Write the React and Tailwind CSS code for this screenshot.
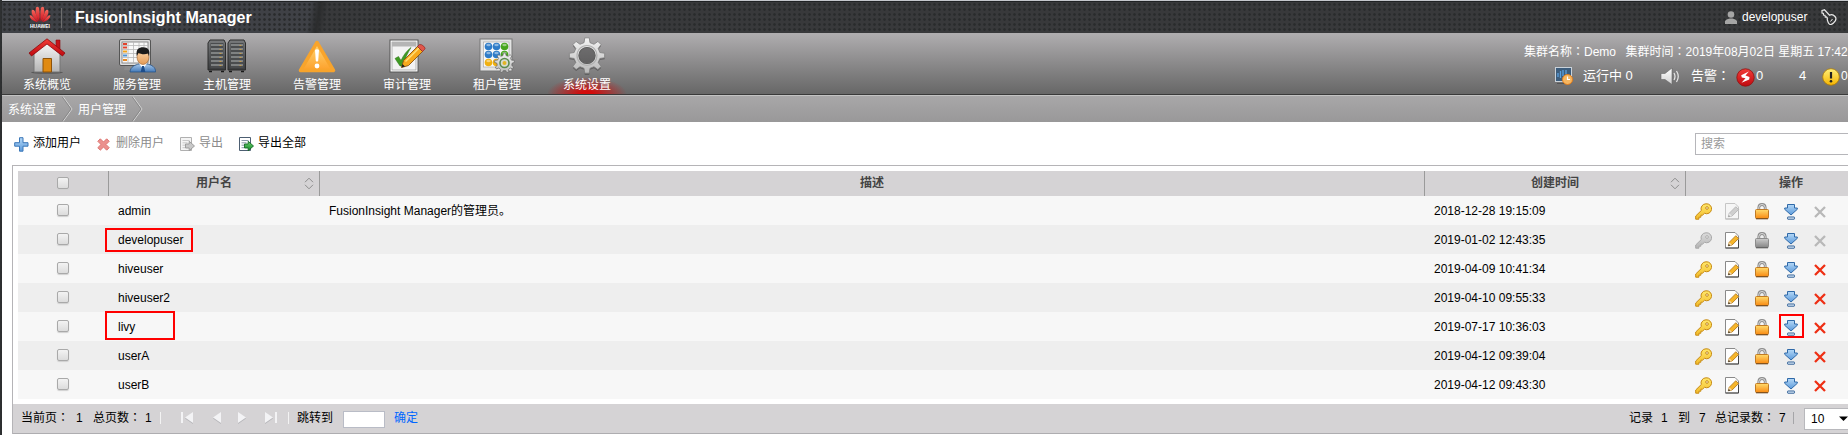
import React from "react";

const FONT = "font-['Liberation_Sans','Noto_Sans_CJK_SC',sans-serif]";
const DOTS = "bg-[radial-gradient(circle,#292b2c_0.9px,transparent_1.7px)] bg-[size:5px_5px]";

const Svg = ({ w, h, children, className = "" }) => (
  <svg width={w} height={h} viewBox={`0 0 ${w} ${h}`} className={`block shrink-0 ${className}`}>{children}</svg>
);

/* Full-width colon, centred in its em box */
const Colon = () => <span className="font-['Noto_Sans_CJK_TC',sans-serif] leading-none">：</span>;

/* ---------- shared gradients ---------- */
const Defs = () => (
  <svg width="0" height="0" className="absolute">
    <defs>
      {[
        ["gWall", "#fafafa", "#b4b4b4"], ["gRed", "#f23c38", "#c00a10"], ["gWarn", "#ffd97a", "#fda02a"],
        ["gGold", "#ffe76a", "#f3bc2a"], ["gGrayKey", "#dcdcdc", "#b4b4b4"], ["gLock", "#ffdb6c", "#f98a12"],
        ["gLockG", "#cccccc", "#858585"], ["gBlue", "#b4d8f7", "#5c9adb"], ["gGear", "#f4f4f4", "#b8b8b8"],
        ["gRack", "#77797b", "#3a3c3e"], ["gGreen", "#6fd06f", "#128a28"], ["gShirt", "#a9c9ec", "#4379b8"],
        ["gFace", "#ffd9ae", "#e39a55"], ["gSpk", "#ffffff", "#d0d0d0"], ["gMinor", "#fff07a", "#f5b400"],
        ["gLogo", "#f4685c", "#d0101e"],
      ].map(([id, a, b]) => (
        <linearGradient key={id} id={id} x1="0" y1="0" x2="0" y2="1">
          <stop offset="0" stopColor={a} /><stop offset="1" stopColor={b} />
        </linearGradient>
      ))}
    </defs>
  </svg>
);

/* ---------- header ---------- */
const Petals = () => (
  <Svg w={24} h={17}>
    <g fill="url(#gLogo)">
      <path d="M11.500 15.500C8 11 6.800 5 8.200 1.200Q10.500 0 11.300 2.500Q12 8 11.500 15.500Z" />
      <path d="M12.500 15.500C16 11 17.200 5 15.800 1.200Q13.500 0 12.700 2.500Q12 8 12.500 15.500Z" />
      <path d="M10.700 15.700C6 13 3 8.500 3.700 4.500Q5 3 6.700 5Q8.700 9.500 10.700 15.700Z" />
      <path d="M13.300 15.700C18 13 21 8.500 20.300 4.500Q19 3 17.300 5Q15.300 9.500 13.300 15.700Z" />
      <path d="M10 16.200C5 15.500 1.800 12.800 1.600 9.300Q3 9 4.500 10.500Q7.500 13 10 16.200Z" />
      <path d="M14 16.200C19 15.500 22.200 12.800 22.400 9.300Q21 9 19.500 10.500Q16.500 13 14 16.200Z" />
    </g>
  </Svg>
);

const House = () => (
  <Svg w={38} h={36}>
    <ellipse cx="19" cy="34.500" rx="16" ry="1.300" fill="#000" opacity=".3" />
    <path d="M28 2h4v12l-4-4z" fill="#c3161a" stroke="#8c0c0e" strokeWidth=".6" />
    <path d="M6 16L19 4L32 16V34H6Z" fill="url(#gWall)" stroke="#777" />
    <path d="M19 .8L37 15L34.500 18L19 6L3.500 18L1 15Z" fill="url(#gRed)" stroke="#8d0a0c" strokeWidth=".8" />
    <path d="M15 20.500H23.500V34H15Z" fill="#e08a12" stroke="#8e5208" />
  </Svg>
);

const Service = () => (
  <Svg w={38} h={36}>
    <rect x="1.500" y="1.500" width="31" height="26" rx="1.500" fill="#dedede" stroke="#555" />
    <rect x="4" y="4" width="26" height="21" fill="#f8f8f8" stroke="#777" strokeWidth=".8" />
    <path d="M4 7.500h26M4 11.500h26M4 15.500h26M4 19.500h26M10 4v21M15.500 4v21M21 4v21M26 4v21" stroke="#b8b8b8" strokeWidth=".8" />
    <path d="M5 6h4M5 9.500h4" stroke="#e2432c" strokeWidth="2" /><path d="M5 13.500h4" stroke="#f2a41c" strokeWidth="2" />
    <path d="M5 17.500h4" stroke="#4b94d8" strokeWidth="2" /><path d="M5 22h4" stroke="#e98a24" strokeWidth="2" />
    <path d="M7 28H20V32H6Z" fill="#8c8c8c" />
    <path d="M12 34C12.500 28.500 17 27 21 26H29C34 27 37.500 29 37.700 34Z" fill="url(#gShirt)" stroke="#285487" strokeWidth=".8" />
    <path d="M21 25.500L25 31L29 25.500L27 24H23Z" fill="#fff" /><path d="M24 28h2l1.300 6h-4.600Z" fill="#1c4d8c" />
    <ellipse cx="25" cy="19" rx="6" ry="7.500" fill="url(#gFace)" stroke="#9b5f2c" strokeWidth=".6" />
    <path d="M18.800 18C17.500 11 21 9.200 25 9.200C30 9.200 32.500 12 31 18.200L30 15.500C26.500 17 22.500 16 20.500 15Z" fill="#1b1b1b" />
  </Svg>
);

const Rack = () => (
  <Svg w={40} h={34}>
    {[1, 21].map((x) => (
      <g key={x}>
        <path d={`M${x + 2} 1H${x + 16}L${x + 17.5} 4V31H${x}V4Z`} fill="url(#gRack)" stroke="#2c2c2c" />
        <rect x={x + 2.5} y="4" width="13" height="25" fill="#4a4c4e" />
        {[6, 10, 14, 18, 22, 26].map((y) => (
          <g key={y}>
            <path d={`M${x + 3} ${y}H${x + 15}`} stroke="#929496" strokeWidth="1.500" />
            <path d={`M${x + 11.5} ${y + 0.5}h2`} stroke="#c49a48" strokeWidth="1" />
          </g>
        ))}
        <path d={`M${x + 1} 32.500h3M${x + 13} 32.500h3`} stroke="#1a1a1a" strokeWidth="1.500" />
      </g>
    ))}
  </Svg>
);

const Warn = () => (
  <Svg w={38} h={34}>
    <path d="M19 3.500L35.500 31.500H2.500Z" fill="url(#gWarn)" stroke="#f8a42c" strokeWidth="3.500" strokeLinejoin="round" />
    <path d="M17 11Q19 9.500 21 11L20.200 22Q19 23 17.800 22Z" fill="#fff" /><circle cx="19" cy="27" r="2.400" fill="#fff" />
  </Svg>
);

const Audit = () => (
  <Svg w={38} h={34}>
    <rect x="2" y="1" width="28" height="32" fill="#fff" stroke="#555" />
    <rect x="4" y="3" width="24" height="28" fill="#f3f3f3" stroke="#999" strokeWidth=".7" />
    <rect x="4" y="3" width="24" height="4.500" fill="#b5b5b5" />
    <path d="M7 19.500L10.500 17.500L13 21.500C15.500 16 18.500 12 23 8.500C19.500 14 17 20 14.500 27H12Z" fill="#3f9b22" stroke="#276d12" strokeWidth=".5" />
    <path d="M13.500 28.500L15.500 21.500L29.500 7.500L34.500 12.500L20.500 26.500Z" fill="#f8a91d" stroke="#8a5410" strokeWidth=".9" />
    <path d="M17.500 22.500L31 9" stroke="#ffe07a" strokeWidth="1.500" />
    <path d="M29.500 7.500L31.500 5.500Q33.500 5 35.800 7.300T36.500 10.500L34.500 12.500Z" fill="#e0564a" stroke="#8f1d18" strokeWidth=".6" />
    <path d="M13.500 28.500L14.500 25L17 27.500Z" fill="#222" />
  </Svg>
);

const gearPath = (n, ro, ri) => {
  const p = [];
  for (let i = 0; i < n; i++) {
    const a = (i * 2 * Math.PI) / n;
    const s = Math.PI / n;
    [[ri, -s * 0.58], [ro, -s * 0.32], [ro, s * 0.32], [ri, s * 0.58]].forEach(([r, d]) =>
      p.push(`${(r * Math.sin(a + d)).toFixed(2)} ${(-r * Math.cos(a + d)).toFixed(2)}`));
  }
  return `M${p.join("L")}Z`;
};

const BALLS = [
  [9.5, 8.5, "#2f7cc8"], [17.5, 8.5, "#2f7cc8"], [25.5, 8.5, "#46a51c"],
  [9.5, 16.5, "#2f7cc8"], [17.5, 16.5, "#2f7cc8"], [25.5, 16.5, "#46a51c"],
  [9.5, 24.5, "#f0b010"], [17.5, 24.5, "#f0b010"],
];

const Tenant = () => (
  <Svg w={36} h={36}>
    <rect x="1" y="1" width="32" height="32" fill="#e4e4e4" stroke="#777" />
    <rect x="4.500" y="4" width="25.500" height="25" fill="#fafafa" stroke="#aaa" strokeWidth=".7" />
    {BALLS.map(([x, y, c]) => (
      <g key={`${x}-${y}`}><circle cx={x} cy={y} r="3.800" fill={c} /><ellipse cx={x} cy={y - 1.5} rx="2.200" ry="1.200" fill="#fff" opacity=".45" /></g>
    ))}
    <g transform="translate(25.500 25)">
      <path d={gearPath(9, 10, 7.6)} fill="url(#gGear)" stroke="#666" strokeWidth=".7" />
      <circle r="4.500" fill="#d7dccf" stroke="#5b8a50" strokeWidth="1.600" /><circle r="2" fill="#e3b423" />
    </g>
  </Svg>
);

const Gear = () => (
  <Svg w={38} h={38}>
    <g transform="translate(19 20)" fill="#000" opacity=".3"><path d={gearPath(8, 17.8, 13.2)} /></g>
    <g transform="translate(19 18.500)">
      <path d={`${gearPath(8, 17.8, 13.2)}M8 0A8 8 0 1 0 -8 0A8 8 0 1 0 8 0Z`} fillRule="evenodd" fill="url(#gGear)" stroke="#808080" strokeWidth=".8" />
      <circle r="10" fill="none" stroke="#b0b0b0" strokeWidth="1.200" /><circle r="8" fill="none" stroke="#5e5e5e" strokeWidth="1.200" />
    </g>
  </Svg>
);

const NAV = [
  ["系统概览", House], ["服务管理", Service], ["主机管理", Rack], ["告警管理", Warn],
  ["审计管理", Audit], ["租户管理", Tenant], ["系统设置", Gear],
];

/* ---------- small icons ---------- */
const Key = ({ off }) => (
  <Svg w={17} h={17}>
    <g fill={off ? "url(#gGrayKey)" : "url(#gGold)"} stroke={off ? "#a8a8a8" : "#c78a14"}>
      <path d="M11 .8a5 5 0 0 0-4.700 6.700L.7 13v3.200h3.200v-2h2v-2h1.600l2-1.900A5 5 0 1 0 11 .8Z" />
      <circle cx="12" cy="5" r="1.300" fill="#fff" />
    </g>
  </Svg>
);
const Edit = ({ off }) => (
  <Svg w={15} h={17}>
    <path d="M.5 .5H10L13.500 4V16H.5Z" fill={off ? "#f6f6f6" : "#fff"} stroke={off ? "#c6c6c6" : "#8a8a8a"} />
    <path d="M.5 16H13.500V8" fill="none" stroke={off ? "#b9b9b9" : "#444"} />
    <path d="M3.300 13.800L4.300 10.200L10.800 3.700L13.600 6.500L7.100 13Z" fill={off ? "#cfcfcf" : "#f7b62a"} stroke={off ? "#b0b0b0" : "#a96e12"} strokeWidth=".8" />
    <path d="M3.300 13.800L4.300 10.200L7.100 13Z" fill={off ? "#e8e8e8" : "#f4d6a4"} /><path d="M3.200 14l.6-2 1.400 1.400Z" fill={off ? "#999" : "#222"} />
  </Svg>
);
const Lock = ({ off }) => (
  <Svg w={14} h={17}>
    <path d="M3.800 8V4.500Q4 1.500 7 1.500T10.200 4.500V8" fill="none" stroke="#8c8c8c" strokeWidth="2.800" />
    <path d="M3.800 8V4.500Q4 1.500 7 1.500T10.200 4.500V8" fill="none" stroke="#dcdcdc" strokeWidth="1" />
    <rect x=".5" y="6.500" width="13" height="9" rx="1" fill={off ? "url(#gLockG)" : "url(#gLock)"} stroke={off ? "#8c8c8c" : "#c07a24"} />
    <path d="M1 15.800h12" stroke={off ? "#555" : "#6b431a"} />
  </Svg>
);
const Down = () => (
  <Svg w={14} h={17}>
    <path d="M3.500 1.500H10.500V5H13.300V6.300L7 12L.7 6.300V5H3.500Z" fill="url(#gBlue)" stroke="#2f69a8" />
    <rect x="3.500" y="14" width="7" height="2.200" rx=".5" fill="#e4f1fc" stroke="#2f5f95" />
  </Svg>
);
const Cross = ({ off }) => (
  <Svg w={12} h={12}>
    <path d="M1 1L11 11M11 1L1 11" stroke={off ? "#b8b8b8" : "#ee2f14"} strokeWidth="2.300" />
  </Svg>
);
const Sorter = () => (
  <Svg w={10} h={13} className="mt-px">
    <path d="M1 5.200L5 1.200L9 5.200M1 7.800L5 11.800L9 7.800" fill="none" stroke="#8d8d8d" />
  </Svg>
);
const Check = () => (
  <span className="-mt-px mr-px block size-3 rounded-[2px] border border-[#a9a9a9] bg-linear-to-b from-[#f3f3f3] to-[#dcdcdc] shadow-[0_1px_1px_#d0d0d0]" />
);

const Plus = () => (
  <Svg w={15} h={15}><path d="M5.500 .7h3.500v5h5v3.500h-5v5h-3.500V9.200H.7v-3.500h4.800Z" fill="url(#gBlue)" stroke="#3a77b8" /></Svg>
);
const Remove = () => (
  <Svg w={13} h={13}><path d="M3.300 .8L6.500 4L9.700 .8L12.200 3.300L9 6.500L12.200 9.700L9.700 12.200L6.500 9L3.300 12.200L.8 9.700L4 6.500L.8 3.300Z" fill="#eb908d" stroke="#dd7672" /></Svg>
);
const Export = ({ off }) => (
  <Svg w={15} h={15}>
    <path d="M.5 .5H11.500V13.500H.5Z" fill={off ? "#f4f4f4" : "#fff"} stroke={off ? "#b0b0b0" : "#4d5f72"} />
    <path d="M2.500 3.500h7M2.500 5.800h5M2.500 8.200h2.500M2.500 10.700h2.500" stroke={off ? "#c9c9c9" : "#8a99a8"} />
    <path d="M5.500 7h3.700V4.300L14.500 9L9.200 13.700V11H5.500Z" fill={off ? "#c8c8c8" : "url(#gGreen)"} stroke={off ? "#979797" : "#136a24"} strokeWidth=".9" />
  </Svg>
);

const TOOLS = [
  ["添加用户", <Plus key="i" />, "text-black", "w-[83px]", "w-[19px]"],
  ["删除用户", <Remove key="i" />, "text-[#8b8b8b]", "w-[83px]", "w-[19px]"],
  ["导出", <Export key="i" off />, "text-[#8b8b8b]", "w-[59px]", "w-[19px]"],
  ["导出全部", <Export key="i" />, "text-black", "w-[80px]", "w-[19px]"],
];

const ROWS = [
  { name: "admin", desc: "FusionInsight Manager的管理员。", time: "2018-12-28 19:15:09", off: ["edit", "del"] },
  { name: "developuser", desc: "", time: "2019-01-02 12:43:35", off: ["key", "lock", "del"] },
  { name: "hiveuser", desc: "", time: "2019-04-09 10:41:34", off: [] },
  { name: "hiveuser2", desc: "", time: "2019-04-10 09:55:33", off: [] },
  { name: "livy", desc: "", time: "2019-07-17 10:36:03", off: [] },
  { name: "userA", desc: "", time: "2019-04-12 09:39:04", off: [] },
  { name: "userB", desc: "", time: "2019-04-12 09:43:30", off: [] },
];

const Chevron = () => (
  <Svg w={12} h={26}>
    <path d="M1 .5L10 13L1 25.500" fill="none" stroke="#d6d6d6" /><path d="M0 .5L9 13L0 25.500" fill="none" stroke="#7c7c7c" strokeWidth=".7" />
  </Svg>
);

const Pager = ({ d, bar, w }) => (
  <Svg w={w} h={12}>
    <path d={d} fill="#b4b4b8" transform="translate(0 1)" /><path d={d} fill="#f3f3f5" />
    {bar !== undefined && <path d={`M${bar} 0V11`} stroke="#f3f3f5" strokeWidth="2" />}
  </Svg>
);

export default function App() {
  return (
    <div className={`flex h-[435px] w-[1848px] overflow-hidden bg-white text-xs text-black ${FONT}`}>
      <Defs />
      <div className={`w-0.5 shrink-0 bg-[#2e3031] ${DOTS}`} />
      <div className="flex w-[1846px] shrink-0 flex-col whitespace-nowrap">
        <header className="flex h-[33px] border-t border-[#c4c7cc] bg-[linear-gradient(100deg,#3f4146_0,#3f4146_305px,#2b2c2d_314px,#38393b_322px,#38393b_100%)] text-white">
          <div className={`flex w-full items-center border-t border-[#202224] pr-[11px] ${DOTS}`}>
            <div className="ml-[26px] flex w-[24px] flex-col items-center">
              <Petals />
              <span className="mt-px h-[5px] text-[5px] leading-[5px] font-bold">HUAWEI</span>
            </div>
            <div className="ml-[9px] h-5 w-px bg-[#6d6d6d]" />
            <h1 className="ml-[13px] text-base leading-5 font-bold tracking-[0.08px]">FusionInsight Manager</h1>
            <div className="-mt-px ml-auto flex items-center">
              <Svg w={12} h={13}>
                <circle cx="6" cy="3.500" r="3.300" fill="#a5a5a5" /><path d="M0 13V10Q1 8 4.500 7.500H7.500Q11 8 12 10V13Z" fill="#a5a5a5" />
              </Svg>
              <span className="ml-[5px] w-[79px]">developuser</span>
              <Svg w={16} h={16}>
                <path d="M1 1.500L3.500 .8L8.500 6.200Q11.500 4.500 14 7.500T12.500 14T7 13T6.800 9.500L5.500 7.800L4.300 8L4 6.300L2.500 6L2.500 4.500L1 4Z" fill="none" stroke="#e8e8e8" strokeWidth="1.200" />
                <path d="M9.500 12.500L11.500 10" stroke="#e8e8e8" />
              </Svg>
            </div>
          </div>
        </header>

        <nav className="flex h-[62px] border-b border-[#3a3a3a] bg-linear-to-b from-[#b0aeb0] to-[#676767] text-white">
          {NAV.map(([label, Icon], i) => (
            <div key={label} className={`flex w-[90px] flex-col items-center ${i === 6 ? "bg-[radial-gradient(ellipse_40px_17px_at_50%_100%,#d40b0b_15%,transparent)]" : ""}`}>
              <div className="mt-[4px] flex h-[38px] items-center"><Icon /></div>
              <span className="pt-px leading-[18px]">{label}</span>
            </div>
          ))}
          <div className="ml-auto flex flex-col">
            <div className="mt-[10px] flex h-[18px] w-[324px] items-center">
              <span className="w-[101.500px]">集群名称<Colon />Demo</span>
              <span>集群时间<Colon />2019年08月02日 星期五 17:42</span>
            </div>
            <div className="mt-[5px] flex h-[20px] items-center text-[13px]">
              <div className="w-[59px] pl-[31px]">
                <Svg w={18} h={18}>
                  <rect x=".5" y=".5" width="16" height="14" fill="#3d5d7c" stroke="#c9d2da" /><path d="M3 10V6M5.500 11V4M8 9V3M11 7V3" stroke="#5aa0df" strokeWidth="1.300" />
                  <path d="M2 16.500h7" stroke="#555" /><circle cx="12.500" cy="12.500" r="5" fill="#f6b660" stroke="#e07c1b" /><path d="M12.500 9.500V12.500H15" fill="none" stroke="#fff" strokeWidth="1.200" />
                </Svg>
              </div>
              <span className="w-[77px]">运行中 0</span>
              <Svg w={20} h={19}>
                <path d="M1 6.500H5L12 1V17.500L5 12.500H1Z" fill="url(#gSpk)" stroke="#666" strokeWidth=".6" />
                <path d="M14 6Q16 9.500 14 13M16.500 4Q20 9.500 16.500 15" fill="none" stroke="#e8e8e8" strokeWidth="1.200" />
              </Svg>
              <span className="ml-[11px] w-[45px]">告警<Colon /></span>
              <Svg w={19} h={19} className="mt-[2px]">
                <circle cx="9.500" cy="9.500" r="8.700" fill="url(#gRed)" stroke="#8e1110" strokeWidth=".8" />
                <path d="M12.800 3.600L5.200 7.200L5.800 9.400L9.500 10.200L5.500 14.800L13.200 11.500L13.500 9L9.500 7.600Z" fill="#fff" />
              </Svg>
              <span className="ml-px w-[43px]">0</span>
              <span className="w-[23px]">4</span>
              <Svg w={18} h={18} className="mt-[2px]">
                <circle cx="9" cy="9" r="8.300" fill="url(#gMinor)" stroke="#b07c05" strokeWidth=".8" />
                <path d="M9 4V10.500" stroke="#222" strokeWidth="2.200" /><circle cx="9" cy="13.300" r="1.300" fill="#222" />
              </Svg>
              <span className="ml-px w-0 text-xs">0</span>
            </div>
          </div>
        </nav>

        <div className="flex h-[27px] items-center border-t border-[#c3c3c3] bg-linear-to-b from-[#a8a7a8] to-[#999899] pl-1.5 text-white">
          <span className="w-[54px] pt-px">系统设置</span><Chevron />
          <span className="ml-[4px] w-[54px] pt-px">用户管理</span><Chevron />
        </div>

        <main className="flex flex-col">
          <div className="flex h-[43px] items-center pl-3">
            {TOOLS.map(([label, icon, tone, w, iw]) => (
              <div key={label} className={`-mt-px flex items-center ${tone} ${w}`}>
                <span className={`${iw} pt-[3px]`}>{icon}</span><span>{label}</span>
              </div>
            ))}
            <div className="ml-auto flex h-[22px] w-[153px] items-center border border-r-0 border-[#b6b6ba] pl-[5px] text-[#999]">搜索</div>
          </div>

          <section className="ml-[10px] flex flex-col border-t border-l border-[#b5b4b7] pt-[5px]">
            <div className="ml-[5px] flex h-[25px] items-center bg-[#d5d3d5] font-bold text-[#444]">
              <div className="flex h-full w-[91px] items-center justify-center border-r border-[#9a9a9a]"><Check /></div>
              <div className="flex h-full w-[211px] items-center border-r border-[#9a9a9a] pr-[5px] pb-px"><span className="w-full pl-[15px] text-center">用户名</span><Sorter /></div>
              <div className="flex h-full w-[1105px] items-center justify-center border-r border-[#9a9a9a] pb-px">描述</div>
              <div className="flex h-full w-[261px] items-center border-r border-[#9a9a9a] pr-[5px] pb-px"><span className="w-full pl-[15px] text-center">创建时间</span><Sorter /></div>
              <div className="pb-px pl-[93px]">操作</div>
            </div>
            {ROWS.map((r) => (
              <div key={r.name} className="ml-[5px] flex h-[29px] items-center odd:bg-[#eeeeee] even:bg-[#f7f7f7]">
                <div className="flex w-[91px] justify-center pr-px"><Check /></div>
                <div className="relative w-[211px] pl-[9px]">
                  {r.name}
                  {r.name === "developuser" && <div className="absolute -top-[4px] -left-[4px] h-[24px] w-[88px] border-2 border-[#f00]" />}
                  {r.name === "livy" && <div className="absolute -top-[8px] -left-[4px] h-[29px] w-[70px] border-2 border-[#f00]" />}
                </div>
                <div className="w-[1105px] pl-[9px]">{r.desc}</div>
                <div className="w-[261px] pl-[9px]">{r.time}</div>
                <div className="flex items-center pt-px pl-[8.500px]">
                  <div className="w-[30px]"><Key off={r.off.includes("key")} /></div>
                  <div className="w-[30.500px]"><Edit off={r.off.includes("edit")} /></div>
                  <div className="w-[29px]"><Lock off={r.off.includes("lock")} /></div>
                  <div className="relative w-[30px]">
                    <Down />
                    {r.name === "livy" && <div className="absolute -top-[5px] -left-[5px] h-[24px] w-[25px] border-2 border-[#f00]" />}
                  </div>
                  <div className="pt-px"><Cross off={r.off.includes("del")} /></div>
                </div>
              </div>
            ))}
            <footer className="mt-[5px] flex h-[30px] items-center border-b border-[#aeadb0] bg-[#d5d3d5] pb-px pl-[8px]">
              <span className="w-[55px]">当前页<Colon /></span><span className="w-[17px]">1</span>
              <span className="w-[52px]">总页数<Colon /></span><span className="w-[15px]">1</span>
              <div className="h-3 w-px bg-[#f3f3f3]" />
              <div className="ml-[20px] w-[32px]"><Pager w={13} bar={1} d="M12 0V11L4 5.500Z" /></div>
              <div className="w-[25px]"><Pager w={8} d="M8 0V11L0 5.500Z" /></div>
              <div className="w-[26px]"><Pager w={8} d="M0 0V11L8 5.500Z" /></div>
              <div className="w-[24px]"><Pager w={13} bar={12} d="M1 0V11L9 5.500Z" /></div>
              <div className="h-3 w-px bg-[#f3f3f3]" />
              <span className="ml-[8px] w-[46px]">跳转到</span>
              <div className="mt-[2px] h-[17px] w-[42px] border border-[#b9bcc6] bg-white" />
              <span className="ml-[9px] text-[#0066ff]">确定</span>
              <span className="ml-auto w-[32px]">记录</span><span className="w-[17px]">1</span><span className="w-[21px]">到</span><span className="w-[16px]">7</span>
              <span className="w-[64px]">总记录数<Colon /></span><span className="w-[14px]">7</span>
              <div className="h-3 w-px bg-[#a5a5a8]" />
              <div className="mt-[2px] ml-[10px] flex h-[22px] w-[44px] items-center border border-r-0 border-[#b8b8bc] bg-white pl-[6px]">
                <span className="w-[28px]">10</span>
                <Svg w={9} h={6}><path d="M0 .5H9L4.500 5Z" fill="#000" /></Svg>
              </div>
            </footer>
          </section>
        </main>
      </div>
    </div>
  );
}
